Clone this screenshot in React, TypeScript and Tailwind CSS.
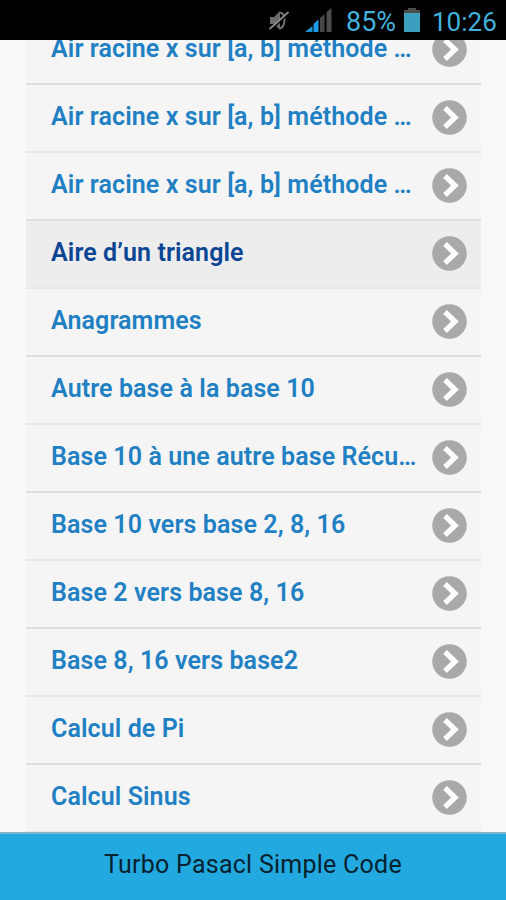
import React from "react";

const items = [
  { title: "Air racine x sur [a, b] méthode …" },
  { title: "Air racine x sur [a, b] méthode …" },
  { title: "Air racine x sur [a, b] méthode …" },
  { title: "Aire d’un triangle", active: true },
  { title: "Anagrammes" },
  { title: "Autre base à la base 10" },
  { title: "Base 10 à une autre base Récu…" },
  { title: "Base 10 vers base 2, 8, 16" },
  { title: "Base 2 vers base 8, 16" },
  { title: "Base 8, 16 vers base2" },
  { title: "Calcul de Pi" },
  { title: "Calcul Sinus" },
];

const MutedIcon = () => (
  <svg width="22" height="24" viewBox="0 0 22 24" fill="none">
    <path d="M2 9h4l6-6v19l-6-6H2z" fill="#6c6c6c" />
    <path d="M12 4.500q5 1 4.500 8t-4.500 8" stroke="#707070" strokeWidth="2" />
    <path d="M2.500 22.500L20.500 6" stroke="#000" strokeWidth="1.500" />
    <path d="M1.500 21L20.500 4" stroke="#8a8a8a" strokeWidth="1.800" />
  </svg>
);

const SignalIcon = () => (
  <svg width="27" height="25" viewBox="0 0 27 25">
    <path d="M0 24v-1l6.500-5v6z" fill="#1e8fd0" />
    <path d="M7.500 24v-8l5-4.500V24z" fill="#1e9be8" />
    <path d="M14 24V10l4.500-4v18z" fill="#484848" />
    <path d="M20.500 24V4l5-4v24z" fill="#4c4c4c" />
  </svg>
);

const BatteryIcon = () => (
  <svg width="16" height="24" viewBox="0 0 16 24">
    <path d="M4 0h8v2h4v4H0V2h4z" fill="#4c4c48" />
    <path d="M0 5h16v19H0z" fill="#3c9fc0" />
  </svg>
);

const ArrowIcon = () => (
  <svg width="35" height="35" viewBox="0 0 35 35" fill="none" className="shrink-0">
    <circle cx="17.500" cy="17.500" r="17.300" fill="#a9a9a9" />
    <path d="M13 8L23 17.500L13 27" stroke="#fff" strokeWidth="5.200" />
  </svg>
);

const StatusBar = () => (
  <header className="relative z-10 flex h-10 shrink-0 items-center bg-black pl-[268px] text-[#40b2dc]">
    <MutedIcon />
    <div className="ml-4"><SignalIcon /></div>
    <span className="ml-[13px] w-[51px] whitespace-nowrap pt-[3px] text-[27px] leading-9">85%</span>
    <div className="ml-[7px]"><BatteryIcon /></div>
    <span className="ml-3 whitespace-nowrap pt-[3px] text-[26px] leading-9">10:26</span>
  </header>
);

export default function App() {
  return (
    <div className="flex h-[900px] w-[506px] flex-col overflow-hidden bg-[#f9f9f9] font-['Roboto','Liberation_Sans',sans-serif]">
      <StatusBar />
      <main className="h-[792px] shrink-0 overflow-hidden">
        <ul className="-mt-[23px] ml-[26px] w-[455px]">
          {items.map((item, i) => (
            <li
              key={i}
              className={`flex h-[68px] items-center justify-between border-b-2 pb-0.5 pl-[25px] pr-[14px] ${
                item.active ? "bg-[#ededed] text-[#0b4593]" : "bg-[#f5f5f5] text-[#1f80c3]"
              } ${i % 2 ? "border-[#e8e8e8]" : "border-[#dedede]"}`}
            >
              <span className="whitespace-nowrap text-[25px] font-semibold tracking-[0.1px]">{item.title}</span>
              <ArrowIcon />
            </li>
          ))}
        </ul>
      </main>
      <footer className="flex flex-1 items-center justify-center border-t-2 border-[#7fb4cc] bg-[#22a9e0] pb-1 text-[25px] tracking-[0.25px] text-[#06222f]">
        Turbo Pasacl Simple Code
      </footer>
    </div>
  );
}
